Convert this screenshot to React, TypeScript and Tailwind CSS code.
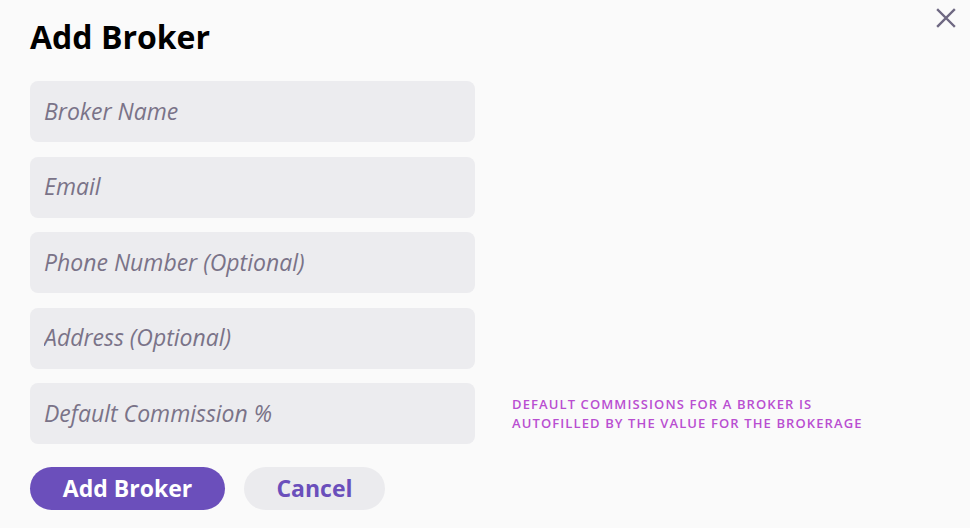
import React from "react";

const fields = [
  "Broker Name",
  "Email",
  "Phone Number (Optional)",
  "Address (Optional)",
  "Default Commission %",
];

export default function App() {
  return (
    <div
      className="relative w-[970px] h-[528px] bg-[#fafafa] px-[30px] pt-[15px]"
      style={{ fontFamily: '"Open Sans", "Noto Sans", sans-serif' }}
    >
      {/* Close button */}
      <button className="absolute right-[14px] top-[8px] text-[#6e6882]">
        <svg width="20" height="20" viewBox="0 0 20 20" fill="none">
          <path d="M2 2L18 18M18 2L2 18" stroke="currentColor" strokeWidth="2.4" strokeLinecap="square" />
        </svg>
      </button>

      <h1 className="text-[32px] leading-[44px] font-bold text-black">Add Broker</h1>

      <div className="mt-[22px] flex flex-col gap-[14.5px]">
        {fields.map((f, i) => (
          <div key={f} className="flex items-center">
            <input
              type="text"
              placeholder={f}
              className="w-[445px] h-[61px] rounded-[8px] bg-[#ececef] px-[14px] pb-[2px] text-[23px] italic text-[#403a4d] placeholder:text-[#7a7388] outline-none"
            />
            {i === fields.length - 1 && (
              <p className="ml-[37px] text-[13px] leading-[19px] font-semibold uppercase tracking-[0.085em] text-[#b94ed1]">
                Default commissions for a broker is
                <br />
                autofilled by the value for the brokerage
              </p>
            )}
          </div>
        ))}
      </div>

      <div className="mt-[23px] flex items-center gap-[19px]">
        <button className="h-[43px] w-[195px] rounded-full bg-[#6b4fbb] text-[23px] font-bold text-white">
          Add Broker
        </button>
        <button className="h-[43px] w-[141px] rounded-full bg-[#ebebee] text-[23px] font-bold text-[#6a4fbb]">
          Cancel
        </button>
      </div>
    </div>
  );
}
